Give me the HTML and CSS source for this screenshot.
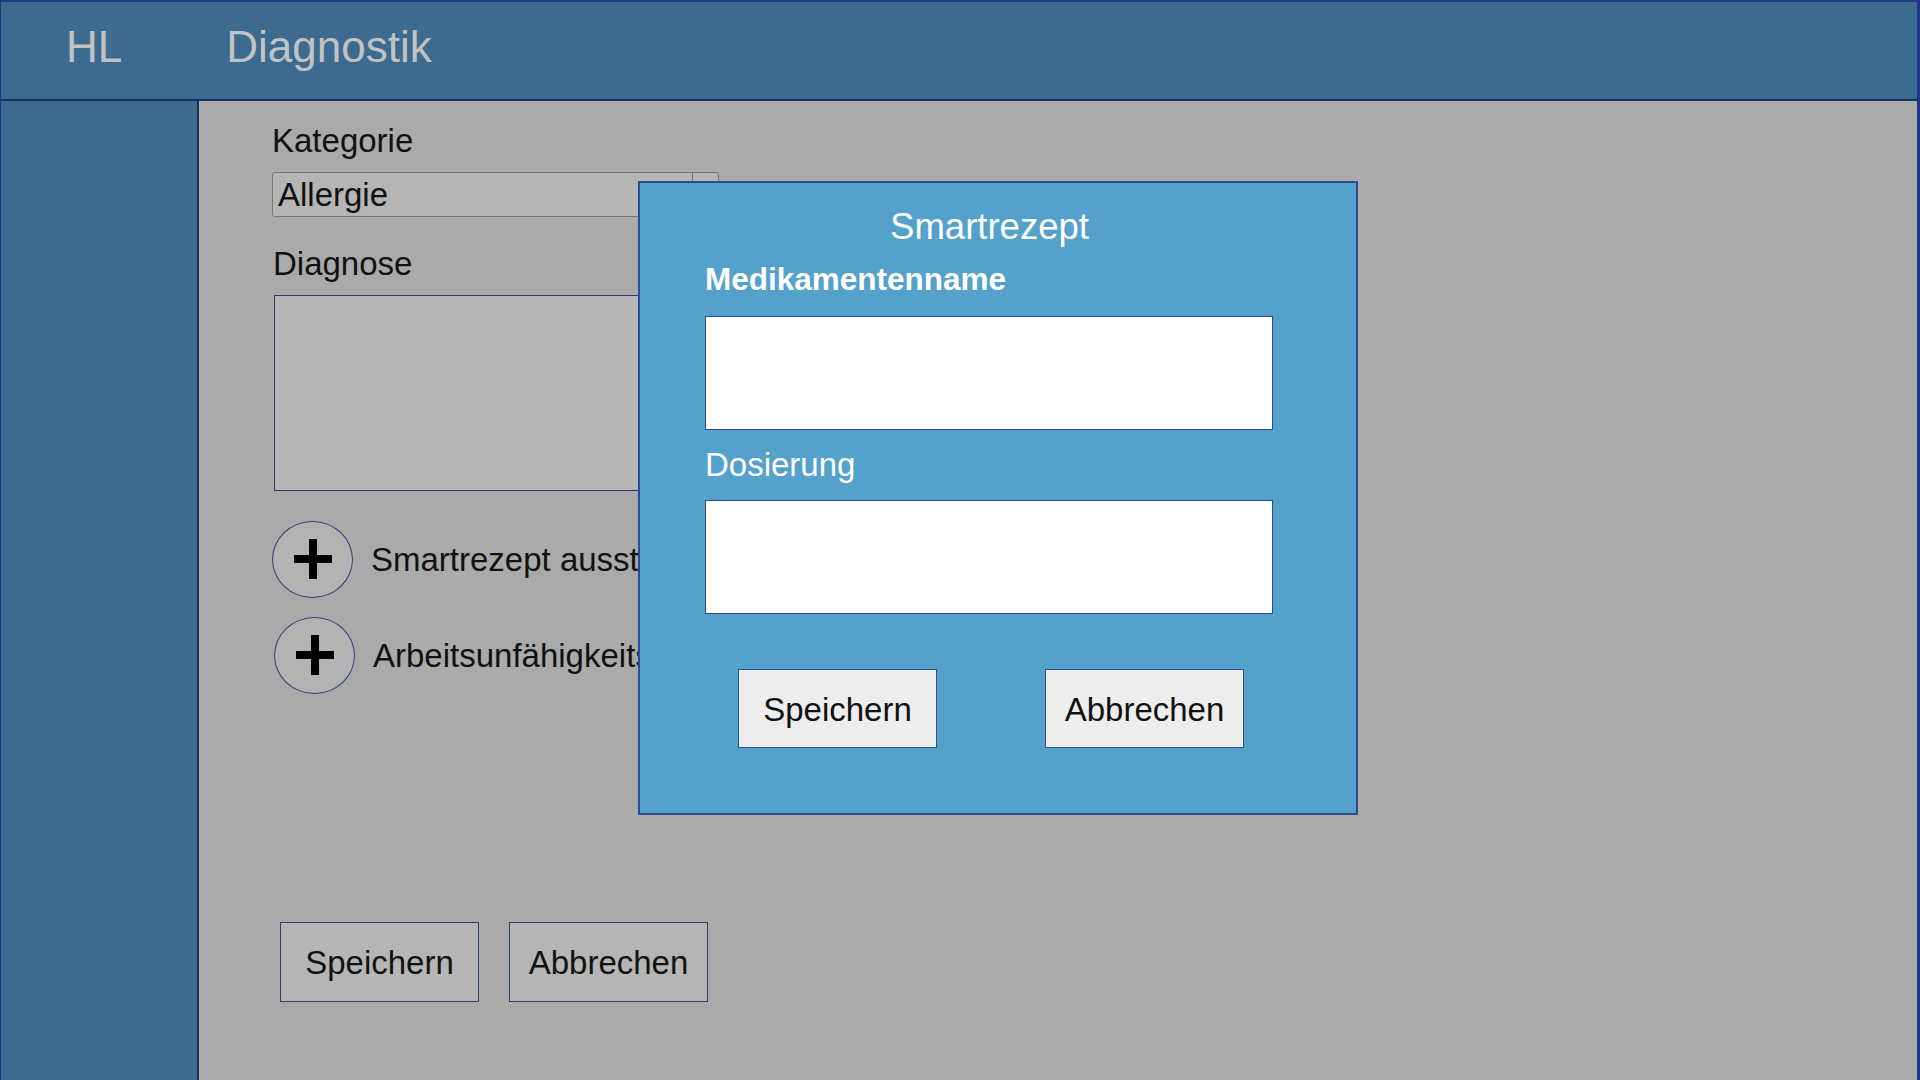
FILE: index.html
```html
<!DOCTYPE html>
<html lang="de">
<head>
<meta charset="utf-8">
<title>Diagnostik</title>
<link rel="stylesheet" href="styles.css">
</head>
<body>
<div class="window">
  <header class="header">
    <span class="brand">HL</span>
    <span class="page-title">Diagnostik</span>
  </header>
  <div class="body-row">
    <aside class="sidebar"></aside>
    <main class="main">
      <div class="label">Kategorie</div>
      <div class="select">
        <span class="select-value">Allergie</span>
        <span class="select-btn"></span>
      </div>
      <div class="label label-diag">Diagnose</div>
      <div class="textarea"></div>
      <div class="action-row">
        <span class="circle">
          <svg width="40" height="40" viewBox="0 0 40 40"><rect x="1" y="16" width="38" height="8" fill="#000"/><rect x="16" y="0" width="8" height="40" fill="#000"/></svg>
        </span>
        <span class="action-text">Smartrezept ausstellen</span>
      </div>
      <div class="action-row action-row-2">
        <span class="circle">
          <svg width="40" height="40" viewBox="0 0 40 40"><rect x="1" y="16" width="38" height="8" fill="#000"/><rect x="16" y="0" width="8" height="40" fill="#000"/></svg>
        </span>
        <span class="action-text">Arbeitsunfähigkeitsbescheinigung ausstellen</span>
      </div>
      <div class="form-buttons">
        <button class="btn btn-gray">Speichern</button>
        <button class="btn btn-gray">Abbrechen</button>
      </div>
    </main>
  </div>
</div>

<div class="modal">
  <div class="modal-title">Smartrezept</div>
  <div class="modal-label bold">Medikamentenname</div>
  <div class="modal-input"></div>
  <div class="modal-label">Dosierung</div>
  <div class="modal-input second"></div>
  <div class="modal-buttons">
    <button class="btn btn-light">Speichern</button>
    <button class="btn btn-light">Abbrechen</button>
  </div>
</div>
</body>
</html>
```

FILE: styles.css
```css
* { box-sizing: border-box; }

html, body {
  margin: 0;
  padding: 0;
  width: 1920px;
  height: 1080px;
  overflow: hidden;
}

body {
  position: relative;
  font-family: "Liberation Sans", Arial, sans-serif;
  color: #111;
  background: #aaaaaa;
}

.window {
  width: 1920px;
  height: 1080px;
  display: flex;
  flex-direction: column;
  border-top: 2px solid #233d85;
  border-left: 1px solid #233d85;
  border-right: 3px solid #1f3585;
}

.header {
  height: 99px;
  flex: none;
  background: #3d6a8f;
  border-bottom: 2px solid #1d2f60;
  display: flex;
  align-items: flex-start;
  padding: 20px 0 0 65px;
  color: #c2c2c2;
  font-size: 44px;
  line-height: 50px;
}

.page-title { margin-left: 104px; }

.body-row {
  flex: 1;
  display: flex;
  min-height: 0;
}

.sidebar {
  width: 198px;
  flex: none;
  background: #3d6a8f;
  border-right: 2px solid #1d2f60;
}

.main {
  flex: 1;
  background: #aaaaaa;
  padding: 22px 0 0 73px;
  display: flex;
  flex-direction: column;
  align-items: flex-start;
}

.label {
  font-size: 33px;
  line-height: 36px;
}

.select {
  margin-top: 13px;
  width: 447px;
  height: 45px;
  background: #b5b5b5;
  border: 1px solid #7c7566;
  border-radius: 3px;
  display: flex;
}

.select-value {
  flex: 1;
  font-size: 33px;
  line-height: 36px;
  padding: 4px 0 0 5px;
}

.select-btn {
  width: 26px;
  border-left: 1px solid #7c7566;
}

.label-diag { margin-top: 29px; margin-left: 1px; }

.textarea {
  margin-top: 13px;
  margin-left: 2px;
  width: 445px;
  height: 196px;
  background: #b5b5b5;
  border: 1px solid #2a3d78;
}

.action-row {
  margin-top: 30px;
  display: flex;
  align-items: center;
  gap: 18px;
  white-space: nowrap;
}

.action-row-2 {
  margin-top: 19px;
  margin-left: 2px;
}

.circle {
  width: 81px;
  height: 77px;
  border-radius: 50%;
  border: 1px solid #2e3f7c;
  background: #b3b3b3;
  display: flex;
  align-items: center;
  justify-content: center;
  flex: none;
}

.circle svg { display: block; margin-top: -2px; }

.action-text {
  font-size: 33px;
  line-height: 36px;
}

.form-buttons {
  margin-top: 228px;
  margin-left: 8px;
  display: flex;
  gap: 30px;
}

.btn {
  font-family: "Liberation Sans", Arial, sans-serif;
  font-size: 33px;
  line-height: 36px;
  color: #111;
  width: 199px;
  height: 80px;
  padding: 2px 0 0;
  display: flex;
  align-items: center;
  justify-content: center;
  cursor: pointer;
}

.btn-gray {
  background: #b5b5b5;
  border: 1px solid #2b3f7a;
}

.btn-light {
  background: #ededed;
  border: 1px solid #2f4c96;
  height: 79px;
}

.modal {
  position: absolute;
  left: 638px;
  top: 181px;
  width: 720px;
  height: 634px;
  background: #54a1cb;
  border: 2px solid #2d4b94;
  padding: 24px 0 0 65px;
  color: #fff;
  display: flex;
  flex-direction: column;
  align-items: flex-start;
}

.modal-title {
  align-self: stretch;
  text-align: center;
  padding-right: 82px;
  font-size: 36.5px;
  line-height: 40px;
}

.modal-label {
  margin-top: 14px;
  font-size: 33px;
  line-height: 36px;
}

.modal-label.bold {
  font-weight: bold;
  font-size: 31.5px;
}

.modal-input {
  margin-top: 19px;
  width: 568px;
  height: 114px;
  background: #fff;
  border: 1px solid #2c4a98;
}

.modal-input.second { margin-top: 17px; }

.modal-input + .modal-label { margin-top: 17px; }

.modal-buttons {
  margin-top: 55px;
  margin-left: 33px;
  display: flex;
  gap: 108px;
}
```
